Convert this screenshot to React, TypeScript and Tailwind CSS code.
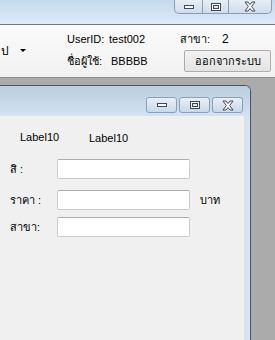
import React from "react";

const font = { fontFamily: '"Liberation Sans", "Noto Sans", sans-serif' };

function MinIcon() {
  return (
    <svg width="12" height="6" viewBox="0 0 12 6">
      <rect x="1.5" y="1.5" width="9" height="3" fill="#fff" stroke="#3c4a5c" strokeWidth="1" />
    </svg>
  );
}
function MaxIcon() {
  return (
    <svg width="12" height="10" viewBox="0 0 12 10">
      <rect x="1.5" y="1.5" width="9" height="7" fill="#fff" stroke="#3c4a5c" strokeWidth="1" />
      <rect x="3.5" y="3.5" width="5" height="3" fill="#dfe8f2" stroke="#3c4a5c" strokeWidth="1" />
    </svg>
  );
}
function CloseIcon() {
  return (
    <svg width="14" height="11" viewBox="0 0 14 11">
      <path d="M2 1 L5 1 L7 3.5 L9 1 L12 1 L8.6 5.5 L12 10 L9 10 L7 7.5 L5 10 L2 10 L5.4 5.5 Z" fill="#fff" stroke="#3c4a5c" strokeWidth="1" strokeLinejoin="round" />
    </svg>
  );
}

function ChildBtn({ children }: { children: React.ReactNode }) {
  return (
    <div className="w-[31px] h-[16px] rounded-[3px] border border-[#8d9fb6] bg-gradient-to-b from-[#e8eff8] to-[#c9d8ea] flex items-center justify-center">
      {children}
    </div>
  );
}

export default function App() {
  return (
    <div className="w-[275px] h-[340px] overflow-hidden flex flex-col text-[11px] text-black" style={font}>
      {/* outer title bar */}
      <div className="h-[24px] shrink-0 bg-gradient-to-b from-[#c6d9ee] to-[#dceaf8] flex justify-end pr-[3px]">
        <div className="h-[14px] flex rounded-b-[5px] border border-t-0 border-[#8c9db2] bg-gradient-to-b from-[#e6eef7] to-[#cfdcea] overflow-hidden">
          <div className="w-[28px] flex items-center justify-center border-r border-[#8c9db2]"><MinIcon /></div>
          <div className="w-[26px] flex items-center justify-center border-r border-[#8c9db2]"><MaxIcon /></div>
          <div className="w-[42px] flex items-center justify-center"><CloseIcon /></div>
        </div>
      </div>
      <div className="h-[1px] shrink-0 bg-[#6b7886]" />
      {/* menu / info area */}
      <div className="h-[52px] shrink-0 bg-gradient-to-b from-[#fbfbfb] to-[#f1f1f1] flex">
        <div className="w-[67px] shrink-0 flex items-start pt-[19px]">
          <span className="ml-[1px] w-[9px] text-[12px] leading-[14px] whitespace-nowrap">ป</span>
          <svg width="8" height="6" viewBox="0 0 8 6" className="ml-[9px] mt-[4px]"><path d="M1 1 L7 1 L4 4 Z" fill="#000" /></svg>
        </div>
        <div className="flex flex-col">
          <div className="h-[13px] mt-[8px] flex items-center leading-[13px] whitespace-nowrap">
            <span className="w-[42px] shrink-0">UserID:</span>
            <span className="w-[71px] shrink-0">test002</span>
            <span className="w-[42px] shrink-0">สาขา:</span>
            <span className="text-[12px]">2</span>
          </div>
          <div className="h-[22px] mt-[4px] flex items-center leading-[13px] whitespace-nowrap">
            <span className="w-[44px] shrink-0">ชื่อผู้ใช้:</span>
            <span className="w-[73px] shrink-0">BBBBB</span>
            <div className="w-[87px] h-[22px] shrink-0 border border-[#acacac] rounded-[2px] bg-gradient-to-b from-[#f2f2f2] to-[#e3e3e3] flex items-center justify-center">
              ออกจากระบบ
            </div>
          </div>
        </div>
      </div>
      <div className="h-[1px] shrink-0 bg-[#8e8e8e]" />
      {/* MDI client */}
      <div className="flex-1 bg-[#ababab] pt-[7px]">
        <div className="w-[251px] h-full border-t border-r border-[#4f5358] rounded-tr-[6px] bg-[#d6e4f2] flex flex-col overflow-hidden">
          <div className="h-[30px] shrink-0 bg-gradient-to-b from-[#bacde1] to-[#d4e2f1] flex justify-end items-start pt-[11px] pr-[7px] gap-[2px]">
            <ChildBtn><MinIcon /></ChildBtn>
            <ChildBtn><MaxIcon /></ChildBtn>
            <ChildBtn><CloseIcon /></ChildBtn>
          </div>
          <div className="flex-1 mr-[6px] bg-[#f0f0f0] flex flex-col">
            <div className="flex pt-[15px] leading-[13px]">
              <span className="ml-[20px] w-[69px]">Label10</span>
              <span className="mt-[1px]">Label10</span>
            </div>
            <div className="mt-[14px] flex items-center">
              <span className="ml-[10px] w-[47px]">สิ :</span>
              <div className="w-[133px] h-[20px] bg-white border border-[#c9ccd0] border-t-[#abadb3] rounded-[2px]" />
            </div>
            <div className="mt-[11px] flex items-center">
              <span className="ml-[10px] w-[47px]">ราคา :</span>
              <div className="w-[133px] h-[20px] bg-white border border-[#c9ccd0] border-t-[#abadb3] rounded-[2px]" />
              <span className="ml-[10px]">บาท</span>
            </div>
            <div className="mt-[7px] flex items-center">
              <span className="ml-[10px] w-[47px]">สาขา:</span>
              <div className="w-[133px] h-[20px] bg-white border border-[#c9ccd0] border-t-[#abadb3] rounded-[2px]" />
            </div>
          </div>
        </div>
      </div>
    </div>
  );
}
